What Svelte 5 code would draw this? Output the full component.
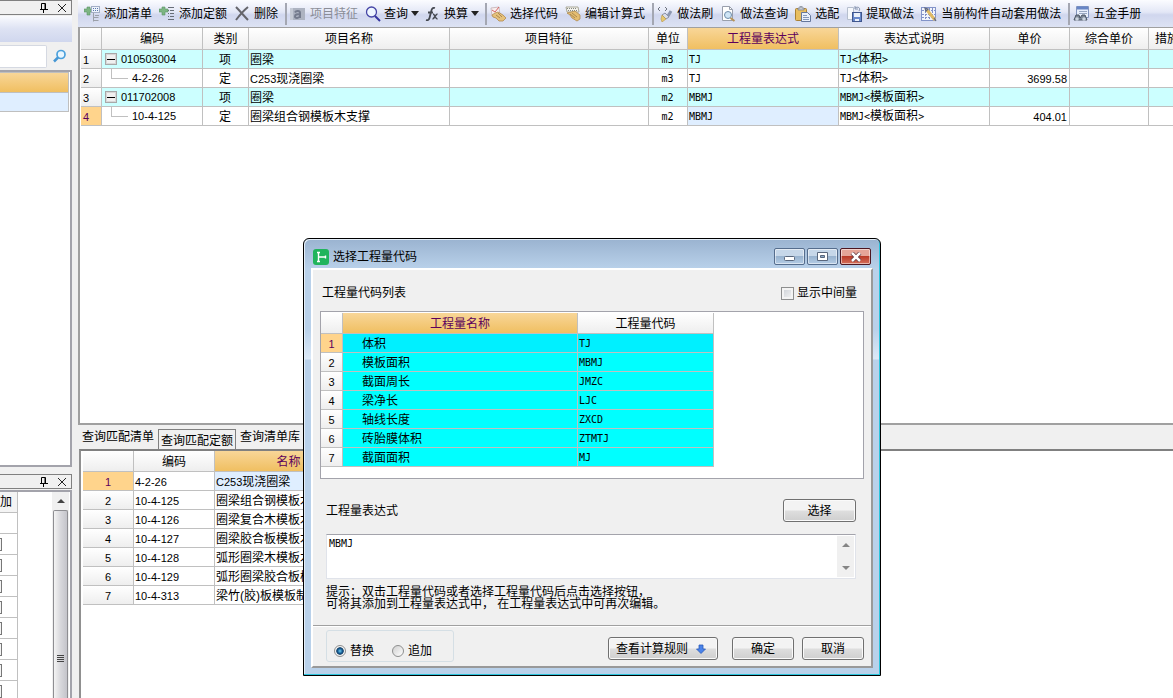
<script>
  const tools = [
    { icon: 'addList', label: '添加清单' },
    { icon: 'addQuota', label: '添加定额' },
    { icon: 'remove', label: '删除' },
    { sep: true },
    { icon: 'feature', label: '项目特征', disabled: true },
    { icon: 'search', label: '查询', menu: true },
    { icon: 'fx', label: '换算', menu: true },
    { sep: true },
    { icon: 'pick', label: '选择代码' },
    { icon: 'formula', label: '编辑计算式' },
    { sep: true },
    { icon: 'brush', label: '做法刷' },
    { icon: 'docSearch', label: '做法查询' },
    { icon: 'paste', label: '选配' },
    { icon: 'extract', label: '提取做法' },
    { icon: 'auto', label: '当前构件自动套用做法' },
    { sep: true },
    { icon: 'manual', label: '五金手册' }
  ];

  const headers = ['编码', '类别', '项目名称', '项目特征', '单位', '工程量表达式', '表达式说明', '单价', '综合单价', '措施'];

  const items = [
    { code: '010503004', kind: '项', name: '圈梁', unit: 'm3', expr: 'TJ', note: '体积', price: '' },
    { code: '4-2-26', kind: '定', pre: 'C253', name: '现浇圈梁', unit: 'm3', expr: 'TJ', note: '体积', price: '3699.58', child: true },
    { code: '011702008', kind: '项', name: '圈梁', unit: 'm2', expr: 'MBMJ', note: '模板面积', price: '' },
    { code: '10-4-125', kind: '定', name: '圈梁组合钢模板木支撑', unit: 'm2', expr: 'MBMJ', note: '模板面积', price: '404.01', child: true }
  ];

  const quotas = [
    { code: '4-2-26', pre: 'C253', name: '现浇圈梁' },
    { code: '10-4-125', name: '圈梁组合钢模板木支撑' },
    { code: '10-4-126', name: '圈梁复合木模板木支撑' },
    { code: '10-4-127', name: '圈梁胶合板模板木支撑' },
    { code: '10-4-128', name: '弧形圈梁木模板木支撑' },
    { code: '10-4-129', name: '弧形圈梁胶合板模板' },
    { code: '10-4-313', name: '梁竹(胶)板模板制作' }
  ];

  const codes = [
    { name: '体积', code: 'TJ' },
    { name: '模板面积', code: 'MBMJ' },
    { name: '截面周长', code: 'JMZC' },
    { name: '梁净长', code: 'LJC' },
    { name: '轴线长度', code: 'ZXCD' },
    { name: '砖胎膜体积', code: 'ZTMTJ' },
    { name: '截面面积', code: 'MJ' }
  ];

  const tabs = ['查询匹配清单', '查询匹配定额', '查询清单库'];

  let activeTab = $state(1);
  let currentCode = $state(0);
  let expression = $state('MBMJ');
  let mode = $state('replace');
  let showMiddle = $state(false);

  function choose() {
    const code = codes[currentCode].code;
    expression = mode === 'replace' ? code : expression + '+' + code;
  }
</script>

{#snippet icon(name)}
  <svg class="icon" width="16" height="16" viewBox="0 0 16 16" fill="none" aria-hidden="true">
    {#if name === 'addList'}
      <path d="M3 1h3v2h3v3H6v3H3V6H0V3h3z" fill="#7db583" stroke="#5c9467" stroke-width=".6" />
      <rect x="7.5" y=".5" width="8" height="6" fill="#eef3fb" stroke="#a3aec6" />
      <path d="M9 2.5h5M9 4.5h5" stroke="#5877ad" stroke-dasharray="1 1" />
      <path d="M9.500 7v8.500M9.500 11.500h5M9.500 14.500h5M11 9.500h4" stroke="#9ba0a9" />
    {:else if name === 'addQuota'}
      <path d="M3 1h3v2h3v3H6v3H3V6H0V3h3z" fill="#7db583" stroke="#5c9467" stroke-width=".6" />
      <path d="M9 1.500h6M11 4.500h4M11 7.500h4M11 10.500h4M9 13.500h6" stroke="#686e78" />
      <path d="M9.500 4v8" stroke="#686e78" stroke-dasharray="1 2" />
    {:else if name === 'remove'}
      <path d="M2 1c4 4 8 9 12 13M14 1C9 5 5 10 2 14" stroke="#65656b" stroke-width="2" />
    {:else if name === 'feature'}
      <rect y="2" width="15" height="12" fill="#adb3c1" />
      <path d="M5 6.500c1-2 5-2 5 .500v5M10 8.500c-3-.5-5 0-5 2s4 2 5-.500" stroke="#747b8d" stroke-width="2" />
      <path d="M0 2h3v12H0z" fill="#c5cad5" />
    {:else if name === 'search'}
      <circle cx="6.500" cy="6" r="5" fill="#eef6ff" stroke="#4545a5" stroke-width="1.300" />
      <path d="M10 10l5 5" stroke="#3636a0" stroke-width="2" />
    {:else if name === 'fx'}
      <path d="M10 2C7 1 6.500 4 6 6L4.500 12c-.500 2-2 2.500-3.500 2M3 6.500h5" stroke="#444850" stroke-width="1.800" />
      <path d="M8 8c2 0 2 5 4.500 5M12.500 8c-2 0-3 5-5 5" stroke="#444850" stroke-width="1.500" />
    {:else if name === 'pick'}
      <path d="M1 2l8-1 1 8-8 1z" fill="#f8eeee" stroke="#cdbcc0" />
      <path d="M2 4l3 2 4-5" stroke="#d66363" />
      <path d="M5 7l3-1 5 3 3 3-3 3H9L6 12l-3-1-1-2z" fill="#e6c17b" stroke="#b18c50" stroke-width=".8" />
      <path d="M8 7l4 4M6 9l4 3" stroke="#ac8a50" />
    {:else if name === 'formula'}
      <path d="M1 1h12l1 5H2z" fill="#f4f3ed" stroke="#aaa998" />
      <path d="M2 2.500h10M3 4.500h9" stroke="#858985" stroke-dasharray="1 1" />
      <path d="M2 7l8-2 5 4v4l-3 2-5-3-2-3z" fill="#e4bd70" stroke="#b18c50" stroke-width=".8" />
      <path d="M7 7l5 4M5 8l5 4" stroke="#ac8a50" />
    {:else if name === 'brush'}
      <path d="M3 1L1 3l2 2M8 1l2 2-2 2" stroke="#6f747f" />
      <path d="M14 5l-3 5" stroke="#8d98b1" stroke-width="3" />
      <path d="M5 9l3-2 4 4-3 2z" fill="#d8dce8" stroke="#8c92a5" />
      <path d="M5 9l4 4-4 3-1-3z" fill="#e6c86f" stroke="#b99546" stroke-width=".6" />
    {:else if name === 'docSearch'}
      <path d="M2.500.500h7l3 3v11h-10z" fill="#fff" stroke="#999fac" />
      <path d="M9.500.500v3h3" stroke="#999fac" />
      <circle cx="8" cy="9" r="3.500" fill="#cfe5f6" stroke="#708dab" />
      <path d="M10.500 12l4 3" stroke="#b69358" stroke-width="2" />
    {:else if name === 'paste'}
      <rect x=".500" y="2.500" width="11" height="12" rx="1" fill="#e8be61" stroke="#aa8134" />
      <path d="M3 4V2h2V0h2v2h2v2z" fill="#c7cbd2" stroke="#797f8b" stroke-width=".7" />
      <path d="M6.500 6.500h6l3 3v6h-9z" fill="#eaf0fb" stroke="#65779c" />
      <path d="M8 9.500h4M8 11.500h6M8 13.500h6" stroke="#8598bb" />
    {:else if name === 'extract'}
      <path d="M1.500 1.500h6v12h-6z" fill="#f6f8fc" stroke="#b6bfce" />
      <rect x="6.500" y="6.500" width="9" height="9" fill="#6888cb" stroke="#3f568d" />
      <path d="M8 7h6v4H8zM9 13h4v2H9z" fill="#e9eff9" />
      <path d="M13 5C15 2 12 0 9 2M9 0v3h3" stroke="#8694b0" />
    {:else if name === 'auto'}
      <rect x=".500" y="1.500" width="14" height="13" fill="#f1f4fc" stroke="#8394c9" />
      <path d="M1 4.500h13M1 8.500h13M1 11.500h13M4.500 2v12M8.500 2v12M11.500 2v12" stroke="#8090c8" stroke-dasharray="2 1" />
      <path d="M6 4l8 10" stroke="#e0ba63" stroke-width="3" />
      <path d="M4 2l3 1-2 2zM13 12l2 3" stroke="#646b80" stroke-width="1.300" />
    {:else if name === 'manual'}
      <path d="M3.500.500h12v11h-12z" fill="#e8effc" stroke="#8395bd" />
      <path d="M4 2h11" stroke="#6886c6" stroke-width="3" />
      <path d="M6 5.500h8M6 7.500h8" stroke="#9aa8c2" />
      <path d="M1 14l2-5h3l1 3 2-3h3l2 5z" fill="#7c8796" stroke="#4d5766" />
      <circle cx="4" cy="13" r="1.800" fill="#cbd4e0" />
      <circle cx="11" cy="13" r="1.800" fill="#cbd4e0" />
    {/if}
  </svg>
{/snippet}

{#snippet dockTitle()}
  <header class="dock-title">
    <button aria-label="自动隐藏">
      <svg width="10" height="10" viewBox="0 0 10 10" fill="none"><path d="M2.500 6V.500h4V6M1 6.500h8M4.500 6v4M6 1v5" stroke="#000" /></svg>
    </button>
    <button aria-label="关闭">
      <svg width="10" height="10" viewBox="0 0 10 10"><path d="M1 1l8 8M9 1L1 9" stroke="#222" /></svg>
    </button>
  </header>
{/snippet}

<div class="app">
  <aside class="side">
    <section class="dock dock-top">
      {@render dockTitle()}
      <div class="strip"></div>
      <div class="find">
        <input type="text" aria-label="查找" />
        <button aria-label="搜索">
          <svg width="14" height="14" viewBox="0 0 14 14" fill="none">
            <circle cx="8" cy="5.500" r="4" fill="#e8f6ff" stroke="#4ba0dc" stroke-width="1.700" />
            <path d="M5 8.500l-4 4" stroke="#4596d4" stroke-width="2.500" />
          </svg>
        </button>
      </div>
      <div class="tree">
        <div class="tree-head"></div>
        <div class="tree-row"></div>
      </div>
    </section>
    <section class="dock dock-bottom">
      {@render dockTitle()}
      <div class="props">
        <table class="props-table">
          <thead><tr><th>加</th></tr></thead>
          <tbody>
            <tr><td></td></tr>
            {#each Array(8) as _, i}
              <tr><td><input type="checkbox" aria-label="附加 {i + 1}" /></td></tr>
            {/each}
          </tbody>
        </table>
        <div class="scroll">
          <svg width="8" height="5" viewBox="0 0 8 5"><path d="M4 0l4 4H0z" fill="#444" /></svg>
          <div class="thumb"><i></i><i></i><i></i><i></i></div>
        </div>
      </div>
    </section>
  </aside>

  <main class="main">
    <nav class="toolbar">
      {#each tools as t}
        {#if t.sep}
          <span class="sep"></span>
        {:else}
          <button class="tool" class:menu={t.menu} disabled={t.disabled}>
            {@render icon(t.icon)}
            <span>{t.label}</span>
            {#if t.menu}<span class="caret"></span>{/if}
          </button>
        {/if}
      {/each}
    </nav>

    <section class="sheet">
      <table class="grid">
        <colgroup>
          <col class="c-row" /><col class="c-code" /><col class="c-kind" /><col class="c-name" /><col class="c-feat" />
          <col class="c-unit" /><col class="c-expr" /><col class="c-expr" /><col class="c-price" /><col class="c-total" /><col class="c-price" />
        </colgroup>
        <thead>
          <tr>
            <th></th>
            {#each headers as h, i}
              <th class:hot={i === 5} class:cut={i === 9}>{h}</th>
            {/each}
          </tr>
        </thead>
        <tbody>
          {#each items as item, i}
            <tr class:group={!item.child}>
              <th class="num left" class:current={i === 3}>{i + 1}</th>
              <td class="num tree-cell">
                <div class="node">
                  {#if item.child}
                    <span class="branch"></span>
                  {:else}
                    <button class="fold" aria-label="折叠"></button>
                  {/if}
                  {item.code}
                </div>
              </td>
              <td class="center">{item.kind}</td>
              <td><span class="num">{item.pre ?? ''}</span>{item.name}</td>
              <td></td>
              <td class="center code">{item.unit}</td>
              <td class="code" class:focus={i === 3}>{item.expr}</td>
              <td><span class="code">{item.expr}&lt;</span>{item.note}<span class="code">&gt;</span></td>
              <td class="num right">{item.price}</td>
              <td></td>
              <td></td>
            </tr>
          {/each}
        </tbody>
      </table>
    </section>

    <section class="lower">
      <div class="tabs" role="tablist">
        {#each tabs as tab, i}
          <button role="tab" aria-selected={activeTab === i} class:active={activeTab === i} onclick={() => (activeTab = i)}>{tab}</button>
        {/each}
      </div>
      <div class="match">
        <table class="grid">
          <colgroup><col class="m-row" /><col class="m-code" /><col class="m-name" /></colgroup>
          <thead>
            <tr><th></th><th>编码</th><th class="hot">名称</th></tr>
          </thead>
          <tbody>
            {#each quotas as q, i}
              <tr>
                <th class="num" class:current={i === 0}>{i + 1}</th>
                <td class="num">{q.code}</td>
                <td class:focus={i === 0}><span class="num">{q.pre ?? ''}</span>{q.name}</td>
              </tr>
            {/each}
          </tbody>
        </table>
      </div>
    </section>
  </main>

  <div class="dialog" role="dialog" aria-labelledby="dlg-title">
    <header class="dlg-title">
      <svg width="16" height="16" viewBox="0 0 16 16" fill="none" aria-hidden="true">
        <rect width="16" height="16" rx="3" fill="#20b45c" />
        <path d="M4 3.500h3M5.500 3v10M4 12.500h3M6 8h6M12.500 6.500v3" stroke="#fff" stroke-width="1.400" />
      </svg>
      <h1 id="dlg-title">选择工程量代码</h1>
      <div class="caption">
        <button aria-label="最小化">
          <svg width="13" height="9" viewBox="0 0 13 9"><rect x="1.500" y="4.500" width="10" height="4" rx="1" fill="#fff" stroke="#59677d" /></svg>
        </button>
        <button aria-label="最大化">
          <svg width="11" height="9" viewBox="0 0 11 9"><path d="M.500.500h10v8H.500z" fill="#fff" stroke="#59677d" /><path d="M3.500 3.500h4v2h-4z" fill="#8eabc9" stroke="#59677d" /></svg>
        </button>
        <button class="close" aria-label="关闭">
          <svg width="12" height="10" viewBox="0 0 12 10"><path d="M2 1l8 8M10 1L2 9" stroke="#613840" stroke-width="4" /><path d="M2 1l8 8M10 1L2 9" stroke="#fff" stroke-width="2.500" /></svg>
        </button>
      </div>
    </header>

    <div class="dlg-body">
      <div class="content">
        <div class="line list-line">
          <span>工程量代码列表</span>
          <label class="check"><input type="checkbox" bind:checked={showMiddle} />显示中间量</label>
        </div>
        <div class="codes">
          <table class="grid cyan">
            <colgroup><col class="d-row" /><col class="d-name" /><col class="d-code" /></colgroup>
            <thead>
              <tr><th></th><th class="hot">工程量名称</th><th>工程量代码</th></tr>
            </thead>
            <tbody>
              {#each codes as c, i}
                <tr class:selected={currentCode === i} onclick={() => (currentCode = i)} ondblclick={choose}>
                  <th class="num" class:current={currentCode === i}>{i + 1}</th>
                  <td class="indent">{c.name}</td>
                  <td class="code">{c.code}</td>
                </tr>
              {/each}
            </tbody>
          </table>
        </div>
        <div class="line expr-line">
          <label for="expr">工程量表达式</label>
          <button class="btn choose" onclick={choose}>选择</button>
        </div>
        <div class="editor">
          <textarea id="expr" bind:value={expression}></textarea>
          <div class="arrows">
            <svg width="8" height="4" viewBox="0 0 8 4"><path d="M4 0l4 4H0z" fill="#858585" /></svg>
            <svg width="8" height="4" viewBox="0 0 8 4"><path d="M0 0h8L4 4z" fill="#858585" /></svg>
          </div>
        </div>
        <p class="tip">提示：双击工程量代码或者选择工程量代码后点击选择按钮，<br />可将其添加到工程量表达式中， 在工程量表达式中可再次编辑。</p>
      </div>
      <footer>
        <div class="modes" role="radiogroup">
          <label><input type="radio" value="replace" bind:group={mode} />替换</label>
          <label><input type="radio" value="append" bind:group={mode} />追加</label>
        </div>
        <div class="actions">
          <button class="btn rules">
            查看计算规则
            <svg width="10" height="10" viewBox="0 0 10 10"><path d="M3 1h4v4h2.500L5 9.500.500 5H3z" fill="#4a83ea" stroke="#2c5bb8" stroke-width=".8" /></svg>
          </button>
          <button class="btn">确定</button>
          <button class="btn">取消</button>
        </div>
      </footer>
    </div>
  </div>
</div>

<style>
:global(body) {
  margin: 0;
  overflow: hidden;
}
.app, .app button, .app input, .app textarea {
  font-family: "Liberation Sans", "Noto Sans CJK SC", sans-serif;
  font-size: 12px;
  line-height: 16px;
  color: #000;
}
.app * {
  box-sizing: border-box;
}
.app {
  display: flex;
  gap: 6px;
  height: 100vh;
  background: #f0f0f0;
  position: relative;
  overflow: hidden;
  white-space: nowrap;
}
button {
  border: none;
  background: none;
  padding: 0;
  margin: 0;
}
.num {
  font-size: 11px;
}
.code {
  font-family: "DejaVu Sans Mono", monospace;
  font-size: 10px;
}

/* docked panels */
.side {
  width: 72px;
  flex: none;
  display: flex;
  flex-direction: column;
  gap: 7px;
}
.dock {
  display: flex;
  flex-direction: column;
  min-height: 0;
  overflow: hidden;
}
.dock-top {
  flex: 467 1 0;
}
.dock-bottom {
  flex: 224 1 0;
}
.dock-title {
  flex: none;
  height: 15px;
  border: 1px solid #808080;
  border-left: none;
  display: flex;
  justify-content: flex-end;
  align-items: center;
  gap: 8px;
  padding-right: 4px;
}
.dock-title button {
  height: 10px;
  display: flex;
}
.strip {
  flex: none;
  height: 26px;
  margin-top: 1px;
  background: linear-gradient(#fafbfe, #dde2f3 50%, #d0d7ee);
}
.find {
  flex: none;
  height: 28px;
  display: flex;
  align-items: center;
  gap: 6px;
}
.find input {
  width: 47px;
  height: 23px;
  padding: 0;
  border: 1px solid #d5d9e2;
  border-left: none;
  border-radius: 0 2px 2px 0;
  background: #fff;
}
.find button {
  height: 14px;
}
.tree {
  flex: 1;
  background: #fff;
  border: 2px solid #a3a3ab;
  border-left: none;
}
.tree-head {
  height: 21px;
  width: 69px;
  background: linear-gradient(#f8d698, #f0bf61);
  border: 1px solid #bfbfbf;
  border-left: none;
}
.tree-row {
  height: 19px;
  width: 69px;
  background: #dfeeff;
  border: 1px solid #bfbfbf;
  border-width: 0 1px 1px 0;
}
.props {
  flex: 1;
  min-height: 0;
  overflow: hidden;
  display: flex;
  justify-content: space-between;
  margin-top: 1px;
  background: #fff;
  border-top: 2px solid #a3a3ab;
  border-right: 2px solid #a3a3ab;
}
.props-table {
  width: 18px;
  border-spacing: 0;
  align-self: flex-start;
}
.props-table th, .props-table td {
  height: 21px;
  padding: 0;
  border: 1px solid #c0c0c0;
  border-width: 0 1px 1px 0;
}
.props-table th {
  background: #f4f4f4;
  font-weight: normal;
  text-align: left;
}
.props-table input {
  appearance: none;
  display: block;
  width: 13px;
  height: 13px;
  margin: 0 0 0 -11px;
  border: 1px solid #777;
  background: #f4f4f4;
}
.scroll {
  width: 17px;
  display: flex;
  flex-direction: column;
  align-items: center;
  gap: 6px;
  padding-top: 7px;
  margin-right: 1px;
  background: #f0f0f0;
}
.scroll svg {
  flex: none;
}
.thumb {
  flex: 1;
  width: 15px;
  border: 1px solid #8e8e92;
  border-bottom: none;
  border-radius: 2px 2px 0 0;
  background: linear-gradient(90deg, #f4f4f4, #d8d8dc 50%, #c4c4ca);
  display: flex;
  flex-direction: column;
  align-items: center;
  justify-content: flex-end;
  gap: 1px;
  padding-bottom: 36px;
}
.thumb i {
  width: 7px;
  height: 1px;
  background: #444;
}

/* toolbar */
.main {
  flex: 1;
  min-width: 0;
  display: flex;
  flex-direction: column;
}
.toolbar {
  flex: none;
  height: 27px;
  display: flex;
  align-items: center;
  padding-left: 6px;
  overflow: hidden;
  background: linear-gradient(#fbfcff, #e3e7f6 45%, #d0d6ee 55%, #dde3f4);
}
.tool {
  flex: none;
  display: flex;
  align-items: center;
  gap: 4px;
  padding-right: 7px;
}
.tool.menu {
  gap: 3px;
  padding-right: 6px;
}
.tool:disabled {
  color: #8a8d96;
}
.icon {
  flex: none;
}
.caret {
  border: 4px solid transparent;
  border-top: 5px solid #222;
  border-bottom: none;
}
.sep {
  flex: none;
  width: 2px;
  height: 22px;
  margin-right: 3px;
  background: #a4a7b2;
}

/* tables */
.sheet {
  flex: 397 1 0;
  min-height: 0;
  overflow: hidden;
  background: #fff;
  border: 1px solid #a0a0a0;
  border-width: 1px 0 2px 2px;
  padding-left: 1px;
}
.grid {
  table-layout: fixed;
  width: 1px;
  border-spacing: 0;
}
.grid th, .grid td {
  height: 19px;
  padding: 1px 2px 0;
  border: 1px solid #c0c0c0;
  border-width: 0 1px 1px 0;
  overflow: hidden;
  line-height: 16px;
}
.grid td {
  padding-left: 1px;
}
.grid .tree-cell {
  padding-top: 0;
}
.grid th {
  font-weight: normal;
  background: linear-gradient(#fff, #eee);
}
.grid thead th {
  height: 22px;
}
.grid th.hot {
  background: linear-gradient(#f8d698, #f0bf61);
  color: #5c005c;
}
.grid th.current {
  background: #ffd48c;
  color: #5c005c;
}
.grid .left, .grid .cut {
  text-align: left;
}
.grid .cut {
  padding-left: 6px;
}
.grid .center {
  text-align: center;
}
.grid .right {
  text-align: right;
}
.grid .group td {
  background: #ccffff;
}
.grid td.focus {
  background: #dfeeff;
}
.c-row { width: 21px; }
.c-code { width: 101px; }
.c-kind { width: 46px; }
.c-name { width: 201px; }
.c-feat { width: 199px; }
.c-unit { width: 39px; }
.c-expr { width: 151px; }
.c-price { width: 80px; }
.c-total { width: 79px; }
.m-row { width: 51px; }
.m-code { width: 81px; }
.m-name { width: 148px; }
.d-row { width: 22px; }
.d-name { width: 235px; }
.d-code { width: 136px; }
.node {
  display: flex;
  align-items: center;
  gap: 4px;
  height: 18px;
  padding-left: 2px;
}
.fold {
  width: 12px;
  height: 12px;
  border: 1px solid #a8a8a8;
  box-shadow: inset 0 0 0 1px #d8d8d8;
  background: linear-gradient(#000, #000) center / 8px 1px no-repeat #f0f0f0;
}
.branch {
  align-self: flex-start;
  width: 17px;
  height: 10px;
  margin-left: 6px;
  border: 1px solid #c0c0c0;
  border-width: 0 0 1px 1px;
}

/* lower area */
.lower {
  flex: 274 1 0;
  min-height: 0;
  display: flex;
  flex-direction: column;
}
.tabs {
  flex: none;
  height: 24px;
  display: flex;
  align-items: flex-end;
  gap: 2px;
  padding-left: 2px;
}
.tabs button {
  height: 20px;
  padding: 0 2px;
  display: flex;
}
.tabs button.active {
  align-items: flex-end;
  border: 1px solid #808080;
  border-bottom: none;
}
.match {
  flex: 1;
  min-height: 0;
  overflow: hidden;
  margin-left: 1px;
  padding-left: 2px;
  background: #fff;
  border-top: 2px solid #808080;
  border-left: 2px solid #909090;
}
.match .grid thead th {
  height: 21px;
}

/* dialog window */
.dialog {
  position: absolute;
  left: 303px;
  top: 238px;
  width: 578px;
  padding: 0 7px;
  padding-bottom: 7px;
  border: 1px solid #000;
  border-radius: 6px 6px 0 0;
  background: linear-gradient(#9ab3d0, #b9d1ea 30px, #b9d1ea 90px, #dce9f7 120px, #b9d1ea 121px);
  box-shadow: inset -1px -1px #2cc4dc, inset 1px 1px #e4eef8;
}
.dlg-title {
  height: 29px;
  display: flex;
  align-items: center;
  gap: 4px;
  padding: 6px 2px 0 2px;
}
.dlg-title h1 {
  flex: 1;
  margin: 0;
  font-size: 12px;
  font-weight: normal;
}
.caption {
  display: flex;
  gap: 2px;
}
.caption button {
  width: 31px;
  height: 17px;
  display: flex;
  align-items: center;
  justify-content: center;
  border: 1px solid #556d8d;
  border-radius: 2px;
  box-shadow: inset 0 0 0 1px rgba(255, 255, 255, 0.5);
  background: linear-gradient(#c6d7e9 50%, #98b3cf 50%, #b4cce5);
}
.caption .close {
  border-color: #4d1620;
  background: linear-gradient(#e5a598 45%, #ba3b28 50%, #d5705c);
}
.dlg-body {
  background: #f0f0f0;
  border: 2px solid #999;
  border-top-color: #fff;
  border-left-color: #fff;
}
.content {
  padding: 0 7px 15px 7px;
}
.line {
  display: flex;
  justify-content: space-between;
  align-items: center;
}
.list-line {
  height: 41px;
  padding: 5px 7px 0 2px;
}
.expr-line {
  height: 55px;
  padding: 8px 8px 0 6px;
}
.check {
  display: flex;
  align-items: center;
  gap: 3px;
}
.check input {
  width: 13px;
  height: 13px;
  margin: 0;
  appearance: none;
  border: 1px solid #8e8f8f;
  background: linear-gradient(135deg, #cbcfd5, #f6f6f6);
  box-shadow: inset 0 0 0 2px #f4f4f4;
}
.check input:checked {
  background: #4b6da0;
}
.codes {
  height: 168px;
  padding-top: 1px;
  background: #fff;
  border: 1px solid #a3a3ab;
}
.codes .grid thead th {
  height: 21px;
}
.cyan td {
  padding-top: 2px;
  background: #00ffff;
}
.cyan .selected td {
  background: #00f0ff;
}
.grid .indent {
  padding-left: 19px;
}
.btn {
  min-width: 62px;
  height: 23px;
  border: 1px solid #707070;
  border-radius: 3px;
  box-shadow: inset 0 0 0 1px #fafafa;
  background: linear-gradient(#f3f3f3 48%, #dedede 52%, #cfcfcf);
}
.choose {
  min-width: 73px;
}
.editor {
  height: 45px;
  display: flex;
  margin: 0 8px 0 6px;
  background: #fff;
  border: 1px solid #e0e3ea;
  border-top-color: #a3a3ab;
}
.app textarea {
  flex: 1;
  border: none;
  outline: none;
  resize: none;
  padding: 1px 2px 0;
  background: none;
  font-family: "DejaVu Sans Mono", monospace;
  font-size: 10px;
}
.arrows {
  width: 17px;
  margin: 1px;
  display: flex;
  flex-direction: column;
  justify-content: space-between;
  align-items: center;
  padding: 7px 0;
  background: #f0f0f0;
}
.tip {
  margin: 7px 0 0 6px;
  line-height: 12px;
}
footer {
  display: flex;
  justify-content: space-between;
  align-items: center;
  height: 41px;
  padding: 0 7px 0 13px;
  border-top: 1px solid #a0a0a0;
  box-shadow: inset 0 1px #fff;
}
.modes {
  width: 128px;
  height: 32px;
  display: flex;
  gap: 18px;
  padding: 8px 0 0 7px;
  border: 1px solid #d5dfe5;
  border-radius: 3px;
}
.modes label {
  display: flex;
  align-items: center;
  gap: 4px;
  height: 24px;
}
.modes input {
  appearance: none;
  width: 12px;
  height: 12px;
  margin: 0;
  border: 1px solid #8e8f8f;
  border-radius: 50%;
  background: linear-gradient(135deg, #d0d0d0, #fff);
}
.modes input:checked {
  background: radial-gradient(circle at 50% 50%, #6fd0f4, #12548c 35%, #1a4468 48%, #f4f4f4 58%);
}
.actions {
  display: flex;
  gap: 8px;
  padding-top: 5px;
}
.rules {
  display: flex;
  align-items: center;
  gap: 8px;
  padding: 0 11px 0 7px;
  margin-right: 6px;
}
</style>
